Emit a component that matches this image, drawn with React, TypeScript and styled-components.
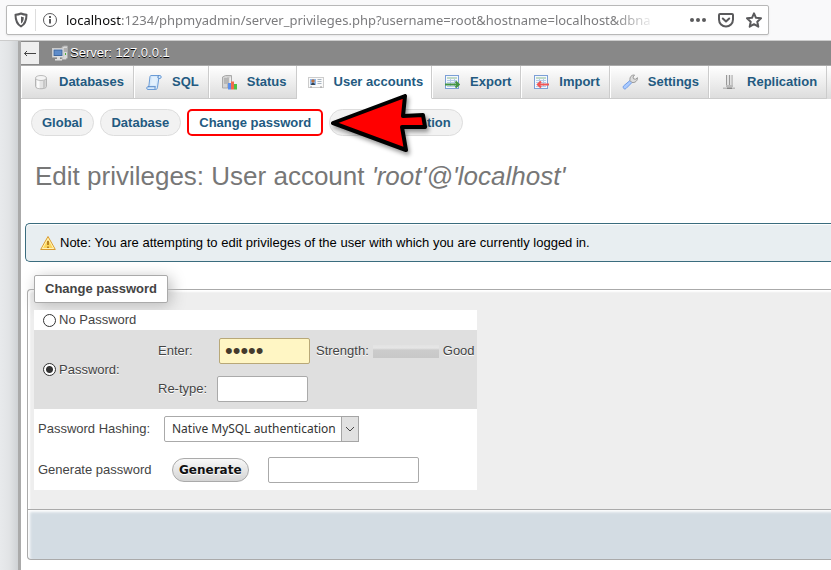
import React from "react";
import styled, { createGlobalStyle } from "styled-components";

const GlobalStyle = createGlobalStyle`
  *, *::before, *::after { box-sizing: border-box; }
  body { margin: 0; background: #fff; color: #444; font: 13px/16px "Liberation Sans", Arial, sans-serif; }
  input, select, button { font: inherit; color: inherit; margin: 0; }
`;

const Page = styled.div`
  display: flex;
  flex-direction: column;
  min-height: 100vh;
  overflow: hidden;
`;

const BrowserBar = styled.header`
  display: flex;
  align-items: center;
  height: 41px;
  padding: 0 62px 1px 6px;
  background: #f9f9fa;
  border-bottom: 1px solid #ccc;
`;

const AddressBox = styled.form`
  display: flex;
  align-items: center;
  flex: 1;
  min-width: 0;
  height: 30px;
  padding: 0 6px 0 5px;
  background: #fff;
  border: 1px solid #b8b8b8;
  border-radius: 2px;
  box-shadow: 0 1px 2px rgba(0, 0, 0, 0.08);
`;

const IconButton = styled.button`
  display: flex;
  padding: 0;
  margin-left: 12px;
  border: 0;
  background: none;
  color: #5a5a5c;
`;

const ShieldButton = styled(IconButton)`
  margin: 0 6px 0 1px;
`;

const InfoButton = styled(IconButton)`
  padding-left: 6px;
  margin: 0 8px 0 0;
  border-left: 1px solid #ddd;
  height: 22px;
  align-items: center;
`;

const Address = styled.div`
  flex: 1;
  min-width: 0;
  margin-right: 20px;
  white-space: nowrap;
  font: 13px/20px "Noto Sans", "Open Sans", sans-serif;
  color: #7c7c7e;
  mask-image: linear-gradient(to right, #000 calc(100% - 44px), transparent calc(100% - 2px));
  b { font-weight: 400; color: #0c0c0d; }
`;

const Body = styled.div`
  display: flex;
  flex: 1;
`;

const Sidebar = styled.aside`
  flex: none;
  width: 21px;
  background: linear-gradient(to right, #e8eaec, #e2e4e6 50%, #cfd2d5);
  border-right: 3px solid #aaa;
`;

const Main = styled.main`
  flex: 1;
  min-width: 0;
  background: #fff;
`;

const Breadcrumb = styled.div`
  display: flex;
  align-items: center;
  height: 24px;
  background: #888;
  border-bottom: 1px solid #888;
  color: #fff;
  text-shadow: 0 1px 0 #000;
`;

const Collapse = styled.button`
  width: 18px;
  height: 22px;
  margin-right: 13px;
  padding: 0;
  display: flex;
  align-items: center;
  justify-content: center;
  border: 0;
  background: #eee;
  color: #444;
`;

const ServerLink = styled.a`
  display: flex;
  align-items: center;
  gap: 2px;
  color: #fff;
  text-decoration: none;
`;

const Tabs = styled.nav`
  display: flex;
  height: 34px;
  overflow: hidden;
  background: linear-gradient(#fff, #dcdcdc);
  border-top: 1px solid #aaa;
`;

const Tab = styled.a<{ $active?: boolean }>`
  display: flex;
  flex: none;
  align-items: center;
  gap: 10px;
  padding: ${(p) => (p.$active ? "0 8px 0 11px" : "0 9px 0 12px")};
  background: ${(p) => (p.$active ? "#fff" : "none")};
  border: solid #ccc;
  border-width: 0 1px 1px 0;
  border-bottom-color: ${(p) => (p.$active ? "#fff" : "#ccc")};
  box-shadow: inset 1px 0 0 #fff;
  color: #235a81;
  font-weight: 700;
  text-decoration: none;
  white-space: nowrap;
`;

const SubTabs = styled.nav`
  display: flex;
  gap: 6px;
  padding: 10px 10px 0;
`;

const PillSlot = styled.div`
  position: relative;
`;

const Pill = styled.a<{ $marked?: boolean }>`
  display: block;
  height: 27px;
  padding: ${(p) => (p.$marked ? "4px 10px" : "5px 11px 5px 10px")};
  background: ${(p) => (p.$marked ? "#fff" : "#f2f2f2")};
  border: ${(p) => (p.$marked ? "2px solid #f00" : "1px solid #ddd")};
  border-radius: ${(p) => (p.$marked ? "5px" : "14px")};
  color: #235a81;
  font-weight: 700;
  text-decoration: none;
  white-space: nowrap;
`;

const Pointer = styled.svg`
  position: absolute;
  left: 0;
  top: -20px;
  overflow: visible;
  pointer-events: none;
  filter: drop-shadow(2px 3px 2px rgba(0, 0, 0, 0.4));
`;

const Title = styled.h2`
  margin: 24px 14px 31px;
  color: #777;
  font-size: 26px;
  line-height: 32px;
  font-weight: 400;
`;

const Notice = styled.div`
  display: flex;
  align-items: center;
  gap: 4px;
  height: 39px;
  margin-left: 4px;
  padding: 0 14px;
  background: #e8eef1;
  border: solid #3a6c7e;
  border-width: 1px 0 1px 1px;
  border-radius: 5px 0 0 5px;
  box-shadow: inset 0 1px 1px #fff;
  color: #000;
`;

const FormSet = styled.fieldset`
  min-width: 0;
  margin: 13px 0 0 6px;
  padding: 7px 6px 19px;
  background: #eee;
  border: solid #aaa;
  border-width: 1px 0 0 1px;
  border-radius: 4px 0 0 0;
  box-shadow: inset 2px 2px 2px #fff;
`;

const Legend = styled.legend`
  padding: 5px 10px;
  background: #fff;
  border: 1px solid #aaa;
  border-radius: 2px;
  box-shadow: 3px 3px 15px #bbb;
  font-weight: 700;
`;

const FormTable = styled.div`
  width: 443px;
  max-width: 100%;
  background: #fff;
  text-shadow: 0 1px 0 #fff;
`;

const ChoiceRow = styled.div<{ $shaded?: boolean }>`
  display: grid;
  grid-template-columns: 115px 1fr;
  align-items: center;
  padding: 0 3px 0 9px;
  min-height: 20px;
  background: ${(p) => (p.$shaded ? "#dfdfdf" : "#fff")};
`;

const Choice = styled.label`
  display: flex;
  align-items: center;
  gap: 3px;
  white-space: nowrap;
`;

const Radio = styled.input`
  appearance: none;
  width: 13px;
  height: 13px;
  border: 1px solid #333;
  border-radius: 50%;
  background: #fff;
  &:checked { background: radial-gradient(circle, #333 3px, #fff 4px); }
`;

const PasswordFields = styled.div`
  padding: 8px 0 7px;
`;

const Line = styled.div<{ $label: number; $top?: number }>`
  display: flex;
  align-items: center;
  margin-top: ${(p) => p.$top || 0}px;
  > label:first-child { flex: none; width: ${(p) => p.$label}px; }
`;

const TextBox = styled.input<{ $filled?: boolean; $wide?: boolean }>`
  width: ${(p) => (p.$wide ? 151 : 91)}px;
  height: 26px;
  padding: 0 5px;
  background: ${(p) => (p.$filled ? "#fff6c4" : "#fff")};
  border: 1px solid ${(p) => (p.$filled ? "#b8a878" : "#aaa")};
  border-radius: 2px;
  color: #443a2c;
  font-size: ${(p) => (p.$filled ? 22 : 13)}px;
`;

const StrengthLabel = styled.span`
  margin: 0 4px 0 6px;
`;

const Strength = styled.div`
  width: 66px;
  height: 13px;
  margin-right: 4px;
  background: linear-gradient(#e2e2e2, #e6e6e6 3px, #ccc 5px, #c8c8c8);
`;

const SettingRow = styled.div`
  display: flex;
  align-items: center;
  min-height: 40px;
  padding-left: 4px;
  & + & { margin-top: 1px; }
`;

const SettingLabel = styled.label`
  width: 126px;
`;

const SelectWrap = styled.div`
  position: relative;
  width: 195px;
`;

const Select = styled.select`
  appearance: none;
  width: 100%;
  height: 26px;
  padding: 0 20px 0 7px;
  background: #fff;
  border: 1px solid #aaa;
  border-radius: 2px;
  color: #333;
  font: 12px/20px "Noto Sans", "DejaVu Sans", sans-serif;
`;

const SelectArrow = styled.span`
  position: absolute;
  top: 0;
  right: 0;
  bottom: 0;
  width: 18px;
  display: flex;
  align-items: center;
  justify-content: center;
  background: #e1e1e1;
  border: 1px solid #a5a5a5;
  pointer-events: none;
`;

const GenerateButton = styled.button`
  height: 24px;
  margin: 0 19px 0 8px;
  padding: 0 6px;
  background: linear-gradient(#f8f8f8, #d4d4d4);
  border: 1px solid #aaa;
  border-radius: 12px;
  color: #111;
  font: 700 12px/20px "DejaVu Sans", Verdana, sans-serif;
  text-shadow: 0 1px 0 #fff;
`;

const FormFooter = styled.footer`
  height: 51px;
  margin: 0 0 10px 6px;
  background: #d3dce3;
  border: solid #aaa;
  border-width: 1px 0 1px 1px;
  border-radius: 0 0 0 4px;
  box-shadow: inset 2px 2px 3px #fff;
`;

const Ico = ({ children }: { children: React.ReactNode }) => (
  <svg width="16" height="16" viewBox="0 0 16 16" fill="none" aria-hidden="true">{children}</svg>
);

const DatabaseIcon = () => (
  <Ico>
    <path d="M2.500 4v8.500c0 3 11 3 11 0V4" fill="#e4e4e4" stroke="#b4b4b4" />
    <path d="M4 5.500v8l2.500 1V6.500z" fill="#fbfbfb" />
    <path d="M10 6.500v8l2.500-1v-8z" fill="#c8c8c8" />
    <ellipse cx="8" cy="4" rx="5.500" ry="2.500" fill="#f4f4f4" stroke="#bdbdbd" />
  </Ico>
);

const SqlIcon = () => (
  <Ico>
    <path d="M5 1.500h9c1.600 0 1.600 3 0 3h-1.200l-1.300 8.700c-.2 1.600-.8 2.300-2 2.300H2c-1.800 0-1.800-2.800 0-2.800h.8L3.800 4c.1-1.500.4-2.500 1.200-2.500z" fill="#d6e9fb" stroke="#6b9cd6" />
    <path d="M13 4.500c-1.600-.2-1.400-2.600 0-3M2 12.700h7.500c-.8.900-.7 2 .2 2.700" stroke="#5587c6" />
    <path d="M6 4h5M5.700 6h5M5.400 8h5M5 10h5" stroke="#eef7ff" />
  </Ico>
);

const StatusIcon = () => (
  <Ico>
    <path d="M1.500 3l3-1.500h6V12l-3 2h-6z" fill="#d4d4d4" stroke="#aaa" />
    <path d="M7 3.500V14M3 5h3M3 7h3M3 9h3" stroke="#999" />
    <path d="M8.500 4l1.500-1v8l-1.500 1z" fill="#eee" />
    <path d="M7 9h3v6.500H7z" fill="#5a90ee" /><path d="M10 7.500h3v8h-3z" fill="#f2694a" /><path d="M13 10h3v5.500h-3z" fill="#4fc043" />
  </Ico>
);

const UserIcon = () => (
  <Ico>
    <rect x=".5" y="3.500" width="15" height="10" fill="#fafafa" stroke="#ccc" />
    <rect x="2" y="5" width="6" height="6" fill="#8db9ee" />
    <circle cx="5" cy="7" r="1.700" fill="#bd713e" />
    <path d="M3 11c0-3 4-3 4 0z" fill="#345" />
    <path d="M9.500 5.500h4M9.500 7.500h4M9.500 9.500h4" stroke="#a8b4c0" />
    <path d="M2 13h2M12 13h2" stroke="#999" />
  </Ico>
);

const TransferIcon = ({ incoming = false }: { incoming?: boolean }) => (
  <Ico>
    <rect x="1.500" y="1.500" width="13" height="13" fill="#f4f8fd" stroke="#7b9fd6" />
    <path d="M3 4h10" stroke="#8dbb90" />
    <path d="M3 6.500h10M3 8.500h10M3 12.500h10M6.500 5v8M10.500 5v8" stroke="#b4cbe8" />
    {incoming
      ? <path d="M16 10.500H5M8 7.500l-3.200 3 3.200 3" stroke="#f05555" strokeWidth="2" />
      : <path d="M1 10.500h13M11.500 7.500l3.200 3-3.200 3" stroke="#439444" strokeWidth="2" />}
  </Ico>
);

const WrenchIcon = () => (
  <Ico>
    <path d="M8 6.500L1.500 12c-1 2 .8 3.800 2.500 2.500L10 8.500z" fill="#a9caff" stroke="#6f9be6" />
    <path d="M8 6.500C7.500 3 9.500.8 12.500 1L11 3l.5 1.800 2 .4L15.500 3.700C15.500 7 13 9 10 8.500z" fill="#ddd" stroke="#999" />
  </Ico>
);

const ReplicationIcon = () => (
  <Ico>
    <path d="M5.500 1v10M8.500 1v12M11 1v10" stroke="#999" />
    <path d="M7 1v10M10 1v10" stroke="#d5d5d5" />
    <path d="M5 11h7v2H5zM2 13.500h12v1.500H2z" fill="#bbb" />
    <path d="M6 13.500h5v1.500H6z" fill="#888" />
  </Ico>
);

const ServerIcon = () => (
  <Ico>
    <path d="M10 2l2-1h3.500v12l-2 1.500H10z" fill="#d8d8d8" stroke="#aaa" />
    <path d="M12 4h3M12 6h3" stroke="#888" /><path d="M13 8h1v2h-1z" fill="#4eae38" />
    <rect x=".5" y="3.500" width="11" height="8.500" fill="#eee" stroke="#ccc" />
    <rect x="2" y="5" width="8" height="5.500" fill="#5e8cca" stroke="#4068a0" />
    <path d="M5 12h3v2h2v1.500H3V14h2z" fill="#ddd" />
  </Ico>
);

const WarningIcon = () => (
  <Ico>
    <path d="M8 1.500L15.300 14.500H.7z" fill="#fbd65d" stroke="#d99b32" strokeLinejoin="round" />
    <path d="M8 3.500L13.700 13.500H2.300z" stroke="#fff2b9" />
    <path d="M8 6v4M8 11.500v1.500" stroke="#b98322" strokeWidth="2" />
  </Ico>
);

const ShieldIcon = () => (
  <Ico>
    <path d="M8 1.500c2 .9 4 1.200 5.500 1.300 0 5.700-1 9.200-5.500 11.700C3.500 12 2.500 8.500 2.500 2.800 4 2.700 6 2.400 8 1.500z" stroke="currentColor" strokeWidth="2" strokeLinejoin="round" />
    <path d="M8 4.500c1 .4 1.800.6 2.800.7-.1 3.200-.8 5-2.800 6.300z" fill="currentColor" />
  </Ico>
);

const InfoIcon = () => (
  <Ico>
    <circle cx="8" cy="8" r="6.500" stroke="currentColor" />
    <path d="M8 7v4.500M8 4v2" stroke="currentColor" strokeWidth="2" />
  </Ico>
);

const DotsIcon = () => (
  <Ico>
    <g fill="currentColor"><circle cx="2" cy="8" r="2" /><circle cx="8" cy="8" r="2" /><circle cx="14" cy="8" r="2" /></g>
  </Ico>
);

const PocketIcon = () => (
  <Ico>
    <path d="M2 2h12q1 0 1 1v4.500a7 7 0 0 1-14 0V3q0-1 1-1z" stroke="currentColor" strokeWidth="2" />
    <path d="M4.800 6.500L8 9.500l3.200-3" stroke="currentColor" strokeWidth="2" strokeLinecap="round" strokeLinejoin="round" />
  </Ico>
);

const StarIcon = () => (
  <Ico>
    <path d="M8 1.300l2 4.500 5 .5-3.700 3.400 1 5L8 12.200l-4.300 2.500 1-5L1 6.300l5-.5z" stroke="currentColor" strokeWidth="2" strokeLinejoin="round" />
  </Ico>
);

const tabs = [
  { name: "Databases", icon: <DatabaseIcon /> },
  { name: "SQL", icon: <SqlIcon /> },
  { name: "Status", icon: <StatusIcon /> },
  { name: "User accounts", icon: <UserIcon />, active: true },
  { name: "Export", icon: <TransferIcon /> },
  { name: "Import", icon: <TransferIcon incoming /> },
  { name: "Settings", icon: <WrenchIcon /> },
  { name: "Replication", icon: <ReplicationIcon /> },
];

export default function App() {
  return (
    <Page>
      <GlobalStyle />
      <BrowserBar>
        <AddressBox>
          <ShieldButton type="button" aria-label="Tracking protection"><ShieldIcon /></ShieldButton>
          <InfoButton type="button" aria-label="Site information"><InfoIcon /></InfoButton>
          <Address>
            <b>localhost</b>:1234/phpmyadmin/server_privileges.php?username=root&amp;hostname=localhost&amp;dbna
          </Address>
          <IconButton type="button" aria-label="Page actions"><DotsIcon /></IconButton>
          <IconButton type="button" aria-label="Save to Pocket"><PocketIcon /></IconButton>
          <IconButton type="button" aria-label="Bookmark"><StarIcon /></IconButton>
        </AddressBox>
      </BrowserBar>
      <Body>
        <Sidebar />
        <Main>
          <Breadcrumb>
            <Collapse type="button" aria-label="Hide panel">
              <svg width="14" height="10" viewBox="0 0 14 10" fill="none" stroke="currentColor" aria-hidden="true">
                <path d="M13 5.500H1.500M4 3L1.500 5.500 4 8" />
              </svg>
            </Collapse>
            <ServerLink href="#"><ServerIcon />Server: 127.0.0.1</ServerLink>
          </Breadcrumb>
          <Tabs>
            {tabs.map((t) => (
              <Tab key={t.name} href="#" $active={t.active}>{t.icon}{t.name}</Tab>
            ))}
          </Tabs>
          <SubTabs>
            <Pill href="#">Global</Pill>
            <Pill href="#">Database</Pill>
            <Pill href="#" $marked>Change password</Pill>
            <PillSlot>
              <Pill href="#">Login Information</Pill>
              <Pointer width="100" height="64" viewBox="0 0 100 64" aria-hidden="true">
                <path d="M4 34L76 7 74 27 94 26 96 38 73 38 77 61z" fill="#f00" stroke="#000" strokeWidth="4" strokeLinejoin="round" />
              </Pointer>
            </PillSlot>
          </SubTabs>
          <Title>Edit privileges: User account <i>'root'@'localhost'</i></Title>
          <Notice><WarningIcon />Note: You are attempting to edit privileges of the user with which you are currently logged in.</Notice>
          <form>
            <FormSet>
              <Legend>Change password</Legend>
              <FormTable>
                <ChoiceRow>
                  <Choice><Radio type="radio" name="mode" />No Password</Choice>
                </ChoiceRow>
                <ChoiceRow $shaded>
                  <Choice><Radio type="radio" name="mode" defaultChecked />Password:</Choice>
                  <PasswordFields>
                    <Line $label={61}>
                      <label htmlFor="pw">Enter:</label>
                      <TextBox id="pw" type="password" defaultValue="admin" $filled />
                      <StrengthLabel>Strength:</StrengthLabel>
                      <Strength />
                      <span>Good</span>
                    </Line>
                    <Line $label={59} $top={12}>
                      <label htmlFor="pw2">Re-type:</label>
                      <TextBox id="pw2" type="password" />
                    </Line>
                  </PasswordFields>
                </ChoiceRow>
                <SettingRow>
                  <SettingLabel htmlFor="hashing">Password Hashing:</SettingLabel>
                  <SelectWrap>
                    <Select id="hashing"><option>Native MySQL authentication</option></Select>
                    <SelectArrow>
                      <svg width="10" height="6" viewBox="0 0 10 6" fill="none" stroke="#444" aria-hidden="true"><path d="M1 1l4 4 4-4" /></svg>
                    </SelectArrow>
                  </SelectWrap>
                </SettingRow>
                <SettingRow>
                  <SettingLabel htmlFor="generated">Generate password</SettingLabel>
                  <GenerateButton type="button">Generate</GenerateButton>
                  <TextBox id="generated" type="text" $wide />
                </SettingRow>
              </FormTable>
            </FormSet>
            <FormFooter />
          </form>
        </Main>
      </Body>
    </Page>
  );
}
